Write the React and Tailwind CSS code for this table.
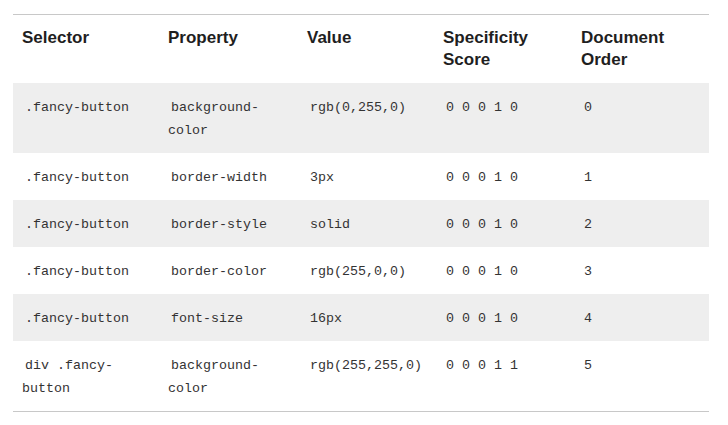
const rows = [
  { sel: ".fancy-button", prop: "background-color", val: "rgb(0,255,0)", spec: "0 0 0 1 0", order: "0" },
  { sel: ".fancy-button", prop: "border-width", val: "3px", spec: "0 0 0 1 0", order: "1" },
  { sel: ".fancy-button", prop: "border-style", val: "solid", spec: "0 0 0 1 0", order: "2" },
  { sel: ".fancy-button", prop: "border-color", val: "rgb(255,0,0)", spec: "0 0 0 1 0", order: "3" },
  { sel: ".fancy-button", prop: "font-size", val: "16px", spec: "0 0 0 1 0", order: "4" },
  { sel: "div .fancy-button", prop: "background-color", val: "rgb(255,255,0)", spec: "0 0 0 1 1", order: "5" },
];

const cols = "grid grid-cols-[146px_139px_136px_138px_137px]";

// inline code: padding only on first fragment
const Code = ({ children }) => <code className="px-[3px] whitespace-pre-wrap">{children}</code>;

const App = () => {
  return (
    <div className="bg-white w-[728px] h-[425px] pt-[14px] pl-[13px] pr-[19px]">
      <div className="border-t border-b border-[#c8c8c8]">
        <div className={cols + " font-['Liberation_Sans',Arial,sans-serif] font-bold text-[17px] leading-[22px] text-[#1f1f1f]"}>
          <div className="px-[9px] py-[12px]">Selector</div>
          <div className="px-[9px] py-[12px]">Property</div>
          <div className="px-[9px] py-[12px]">Value</div>
          <div className="px-[9px] py-[12px]">Specificity Score</div>
          <div className="px-[9px] py-[12px]">Document Order</div>
        </div>
        {rows.map((r, i) => (
          <div
            key={i}
            className={cols + (i % 2 === 0 ? " bg-[#eeeeee]" : " bg-white") + " font-['Liberation_Mono','Courier_New',monospace] text-[13.33px] leading-[23px] text-[#333333]"}
          >
            <div className="px-[9px] pt-[13px] pb-[11px]"><Code>{r.sel}</Code></div>
            <div className="px-[9px] pt-[13px] pb-[11px]"><Code>{r.prop}</Code></div>
            <div className="px-[9px] pt-[13px] pb-[11px]"><Code>{r.val}</Code></div>
            <div className="px-[9px] pt-[13px] pb-[11px]"><Code>{r.spec}</Code></div>
            <div className="px-[9px] pt-[13px] pb-[11px]"><Code>{r.order}</Code></div>
          </div>
        ))}
      </div>
    </div>
  );
};

export default App;
